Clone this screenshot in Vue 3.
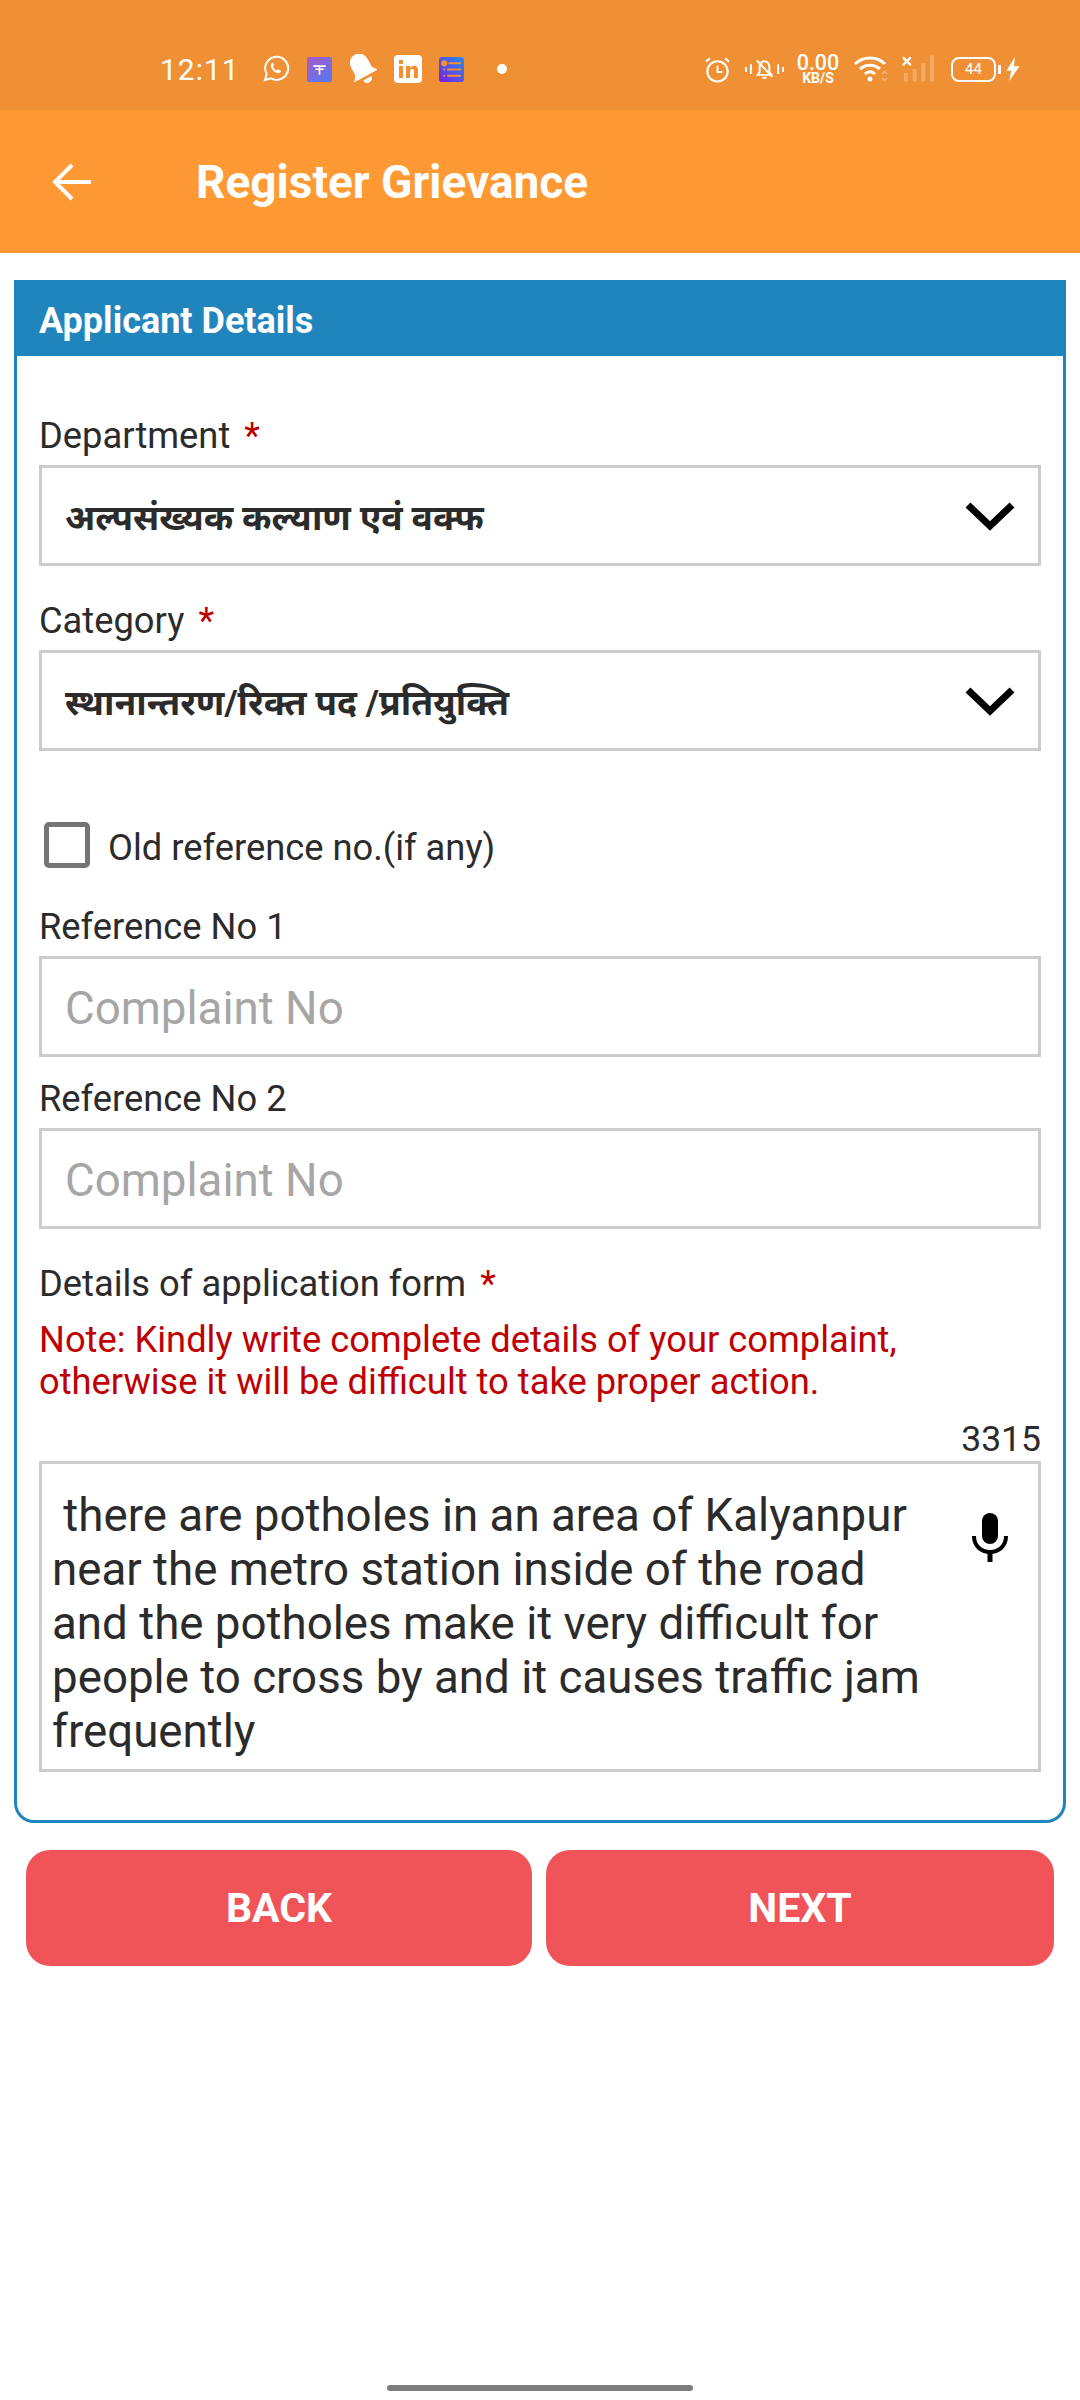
<template>
  <div class="screen">
    <div class="status-bar">
      <div class="status-left">
        <span class="clock">12:11</span>
        <svg class="ic" viewBox="0 0 28 28" width="28" height="28"><path d="M3 25l1.700-6A11.500 11.500 0 1 1 9 23.300z" fill="none" stroke="#fff" stroke-width="2"/><path d="M10 8.500c-2 1.500-1.500 4 1 6.800s5 3.800 7 2.400c.8-.7 1-1.500.8-2l-2.800-1.400-1.200 1.300c-1.500-.5-3.200-2.200-3.800-3.800l1.100-1.200-1.100-2.800c-.5-.2-1.300 0-2 .7z" fill="#fff"/></svg>
        <svg class="ic" viewBox="0 0 24 24" width="25" height="25"><defs><linearGradient id="g1" x1="0" y1="0" x2="0.600" y2="1"><stop offset="0" stop-color="#a85cc4"/><stop offset="1" stop-color="#5f74f0"/></linearGradient></defs><rect width="24" height="24" rx="2" fill="url(#g1)"/><path d="M6 8h12v1.600H6zM8 11h8v1.400H8zM11.200 9h1.600v8h-1.600z" fill="#fff"/></svg>
        <svg class="ic" viewBox="4 3 21 23" width="28" height="31"><g transform="rotate(-28 14 14)" fill="#fff"><path d="M14 2c-5 0-7 4-7 8v6l-3 4h20l-3-4v-6c0-4-2-8-7-8z"/><path d="M10.500 22h7a3.500 3.500 0 0 1-7 0z"/></g></svg>
        <svg class="ic" viewBox="0 0 28 28" width="28" height="28"><rect width="28" height="28" rx="4" fill="#fff"/><path d="M5 11h4v12H5zM5 5h4v4H5zM12 11h4v2c1-1.500 2.500-2.300 4-2.300 3 0 4 2 4 5V23h-4v-6.500c0-1.500-.5-2.500-1.800-2.500S16 15 16 16.500V23h-4z" fill="#ef9034"/></svg>
        <svg class="ic" viewBox="0 0 24 24" width="25" height="25"><defs><linearGradient id="g2" x1="1" y1="0" x2="0" y2="1"><stop offset="0" stop-color="#2b8cf0"/><stop offset="1" stop-color="#7a1fe0"/></linearGradient></defs><rect width="24" height="24" rx="3" fill="url(#g2)"/><circle cx="5" cy="6" r="3" fill="#ef9034"/><path d="M9 5h12v2H9zM8 11h13v2H8zM8 17h13v2H8z" fill="#ef9034"/><circle cx="5" cy="12" r="1" fill="#ef9034"/><circle cx="5" cy="18" r="1" fill="#ef9034"/></svg>
        <span class="dot"></span>
      </div>
      <div class="status-right">
        <svg viewBox="0 0 28 28" width="27" height="27"><circle cx="14" cy="16" r="10.500" fill="none" stroke="#fff" stroke-width="2.200"/><path d="M14 10v6.500h5" fill="none" stroke="#fff" stroke-width="2"/><path d="M2 6l4-3.500M26 6l-4-3.500" stroke="#fff" stroke-width="2.200"/></svg>
        <svg viewBox="0 0 40 28" width="39" height="28"><path d="M13 20h14l-2-3v-5c0-3-2-6-5-6s-5 3-5 6v5zM18 23h4" fill="none" stroke="#fff" stroke-width="2"/><path d="M12 5l16 17M1 12v5M6 9v10M34 9v10M39 12v5" stroke="#fff" stroke-width="2"/></svg>
        <div class="speed"><span>0.00</span><span class="unit">KB/S</span></div>
        <svg viewBox="0 0 34 28" width="34" height="28"><path d="M1 9c8-8 22-8 30 0M6 14c6-5 14-5 20 0M11 19c3-3 7-3 10 0" fill="none" stroke="#fff" stroke-width="3"/><circle cx="16" cy="24" r="2.500" fill="#fff"/><path d="M28 19l2.500-2.500L33 19M28 23l2.500 2.500L33 23" fill="none" stroke="#fff" stroke-opacity=".35" stroke-width="1.500"/></svg>
        <svg viewBox="0 0 34 30" width="33" height="30"><path d="M1 3l8 8M9 3l-8 8" stroke="#fff" stroke-width="2.400"/><path d="M2 19h4v9H2zM11 15h4v13h-4zM20 9h4v19h-4zM29 1h4v27h-4z" fill="#fff" fill-opacity=".25"/></svg>
        <div class="battery"><span>44</span></div>
        <svg viewBox="0 0 16 28" width="16" height="26"><path d="M10 1L1 16h5l-2 11 11-16H9z" fill="#fff"/></svg>
      </div>
    </div>

    <header class="app-bar">
      <svg viewBox="0 0 44 44" width="44" height="44"><path d="M41 22H5M22 5L5 22l17 17" fill="none" stroke="#fff" stroke-width="4"/></svg>
      <h1>Register Grievance</h1>
    </header>

    <section class="card">
      <h2>Applicant Details</h2>
      <div class="card-body">
        <label class="field-label">Department <b>*</b></label>
        <div class="box select">
          <span>अल्पसंख्यक कल्याण एवं वक्फ</span>
          <svg viewBox="0 0 52 32" width="52" height="32"><path d="M4 5l22 21L48 5" fill="none" stroke="#000" stroke-width="7"/></svg>
        </div>

        <label class="field-label second">Category <b>*</b></label>
        <div class="box select">
          <span>स्थानान्तरण/रिक्त पद /प्रतियुक्ति</span>
          <svg viewBox="0 0 52 32" width="52" height="32"><path d="M4 5l22 21L48 5" fill="none" stroke="#000" stroke-width="7"/></svg>
        </div>

        <div class="check-row">
          <span class="checkbox"></span>
          <span class="check-text">Old reference no.(if any)</span>
        </div>

        <label class="field-label">Reference No 1</label>
        <div class="box placeholder">Complaint No</div>
        <label class="field-label ref2">Reference No 2</label>
        <div class="box placeholder">Complaint No</div>

        <label class="field-label details">Details of application form <b>*</b></label>
        <p class="note">Note: Kindly write complete details of your complaint, otherwise it will be difficult to take proper action.</p>
        <div class="counter">3315</div>
        <div class="box textarea">
          <p> there are potholes in an area of Kalyanpur near the metro station inside of the road and the potholes make it very difficult for people to cross by and it causes traffic jam frequently</p>
          <svg viewBox="2 0 36 49" width="36" height="49"><rect x="12" y="0" width="16" height="31" rx="8" fill="#000"/><path d="M4 23c0 10 7 16 16 16s16-6 16-16" fill="none" stroke="#000" stroke-width="4"/><path d="M20 38v11" stroke="#000" stroke-width="5"/></svg>
        </div>
      </div>
    </section>

    <div class="buttons">
      <button>BACK</button>
      <button>NEXT</button>
    </div>

    <div class="spacer"></div>
    <div class="home-bar"></div>
  </div>
</template>

<script setup>
</script>

<style>
html, body { margin: 0; background: #fff; }
</style>

<style scoped>
.screen { width: 1080px; height: 2400px; display: flex; flex-direction: column; font-family: Roboto, "Noto Sans", sans-serif; background: #fff; color: #2b2b2b; }

.status-bar { height: 110px; flex: none; background: #ef9034; display: flex; justify-content: space-between; align-items: center; padding: 28px 59px 0 160px; box-sizing: border-box; color: #fff; }
.status-left, .status-right { display: flex; align-items: center; }
.status-left { gap: 17px; }
.status-right { gap: 14px; }
.clock { font-size: 30px; margin-right: 5px; letter-spacing: 1px; }
.dot { width: 10px; height: 10px; border-radius: 50%; background: #fff; margin-left: 16px; }
.speed { width: 44px; display: flex; flex-direction: column; align-items: center; font-size: 21.500px; line-height: 18px; font-weight: 500; margin-left: -2px; }
.speed .unit { font-size: 14px; line-height: 12px; font-weight: 700; }
.battery { width: 45px; height: 25px; box-sizing: border-box; border: 2px solid #fff; border-radius: 8px; font-size: 15px; display: flex; align-items: center; justify-content: center; position: relative; margin-left: 2px; margin-right: -5px; }
.battery::after { content: ""; position: absolute; right: -7px; top: 6px; width: 3px; height: 9px; background: #fff; }

.app-bar { height: 143px; flex: none; background: #ff9933; display: flex; align-items: center; padding-left: 50px; color: #fff; }
.app-bar h1 { margin: 0 0 0 102px; font-size: 46px; font-weight: 700; }

.card { margin: 27px 14px 0; height: 1543px; flex: none; box-sizing: border-box; border: 3px solid #2185bd; border-top: none; border-radius: 0 0 20px 20px; }
.card h2 { margin: 0 -3px; height: 76px; background: #2185bd; color: #fff; font-size: 36px; font-weight: 700; display: flex; align-items: center; padding: 5px 0 0 25px; box-sizing: border-box; }
.card-body { padding: 56px 22px 0 22px; display: flex; flex-direction: column; }

.field-label { font-size: 36.300px; line-height: 40px; padding-top: 4px; display: block; }
.field-label b { color: #c00000; font-weight: 400; margin-left: 5px; }
.field-label.second { margin-top: 31px; }
.field-label + .box { margin-top: 9px; }
.field-label.ref2 { margin-top: 18px; }
.field-label.details { margin-top: 31px; }

.box { box-sizing: border-box; border: 3px solid #cccccc; height: 101px; display: flex; align-items: center; padding: 0 23px; }
.select { justify-content: space-between; font-size: 35.500px; font-weight: 700; padding-right: 22px; }
.placeholder { font-size: 45.700px; color: #a6a6a6; padding-top: 4px; }

.check-row { display: flex; align-items: center; gap: 18px; font-size: 36.300px; margin-top: 71px; margin-bottom: 35px; padding-left: 5px; height: 46px; }
.check-text { padding-top: 4px; }
.checkbox { width: 46px; height: 46px; box-sizing: border-box; border: 5px solid #757575; border-radius: 5px; }

.note { margin: 15px 0 0; color: #c00000; font-size: 36.300px; line-height: 42px; }
.counter { text-align: right; font-size: 35.500px; line-height: 40px; margin-top: 16px; margin-bottom: 2px; }

.textarea { height: 311px; align-items: flex-start; padding: 25px 30px 0 10px; justify-content: space-between; }
.textarea p { margin: 0; flex: none; width: 885px; font-size: 45.700px; line-height: 54px; white-space: pre-wrap; }
.textarea svg { flex: none; margin-top: 24px; }

.buttons { display: flex; gap: 14px; margin: 27px 26px 0; }
.buttons button { flex: 1; height: 116px; border: none; border-radius: 24px; background: #f05459; color: #fff; font-family: inherit; font-size: 41px; font-weight: 700; }
.buttons button:first-child { flex: none; width: 506px; }

.spacer { flex: 1; }
.home-bar { width: 306px; height: 6px; border-radius: 3px; background: #7d7d7d; margin: 0 auto 9px; }
</style>
